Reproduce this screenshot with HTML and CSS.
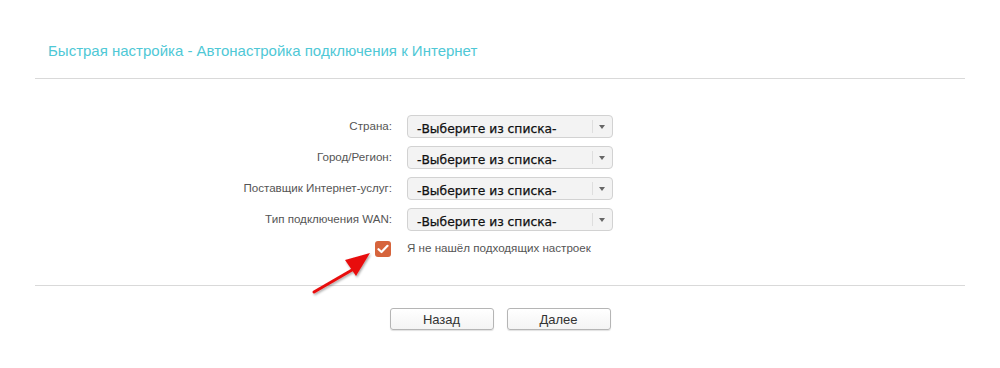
FILE: index.html
```html
<!DOCTYPE html>
<html lang="ru">

<head>
    <meta charset="UTF-8">
    <meta name="viewport" content="width=device-width, initial-scale=1.0">
    <title>Быстрая настройка</title>
    <link rel="stylesheet" href="styles.css">
</head>

<body>
    <div class="page">
        <!-- Заголовок -->
        <h2 class="title">Быстрая настройка - Автонастройка подключения к Интернет</h2>
        <div class="line"></div>

        <!-- Форма -->
        <div class="form">
            <div class="label">Страна:</div>
            <div class="select"><span class="value">-Выберите из списка-</span><span class="drop"></span></div>

            <div class="label">Город/Регион:</div>
            <div class="select"><span class="value">-Выберите из списка-</span><span class="drop"></span></div>

            <div class="label">Поставщик Интернет-услуг:</div>
            <div class="select"><span class="value">-Выберите из списка-</span><span class="drop"></span></div>

            <div class="label">Тип подключения WAN:</div>
            <div class="select"><span class="value">-Выберите из списка-</span><span class="drop"></span></div>

            <div class="label">
                <span class="check">
                    <svg width="12" height="10" viewBox="0 0 12 10">
                        <path d="M1.5 5.2 L4.5 8 L10.5 1.8" fill="none" stroke="#fff" stroke-width="2.2" stroke-linecap="round" stroke-linejoin="round"/>
                    </svg>
                </span>
            </div>
            <div class="check-text">Я не нашёл подходящих настроек</div>
        </div>

        <div class="line"></div>

        <!-- Кнопки -->
        <div class="buttons">
            <button class="btn">Назад</button>
            <button class="btn">Далее</button>
        </div>

        <!-- Красная стрелка -->
        <svg class="arrow" width="80" height="50" viewBox="0 0 80 50">
            <defs>
                <filter id="shadow" x="-20%" y="-20%" width="140%" height="140%">
                    <feDropShadow dx="1" dy="1.5" stdDeviation="1.2" flood-color="#000" flood-opacity="0.35"/>
                </filter>
            </defs>
            <g filter="url(#shadow)">
                <path d="M4 44 L42 22" stroke="#e8100f" stroke-width="3" stroke-linecap="round"/>
                <path d="M60 5 L35 12 L46 28 Z" fill="#e8100f"/>
            </g>
        </svg>
    </div>
</body>

</html>
```

FILE: styles.css
```css
body {
    margin: 0;
    background: #fff;
    font-family: "Liberation Sans", Arial, sans-serif;
}

.page {
    position: relative;
    padding: 0 35px;
    height: 368px;
}

.title {
    margin: 0;
    padding: 42px 0 0 13px;
    height: 36px;
    font-size: 15px;
    font-weight: normal;
    color: #4fc8d6;
}

.line {
    border-top: 1px solid #d9d9d9;
}

.form {
    display: grid;
    grid-template-columns: 357px 206px;
    grid-auto-rows: 31px;
    column-gap: 15px;
    padding-top: 36px;
    height: 170px;
}

.label {
    text-align: right;
    font-size: 11.6px;
    color: #555;
    padding-top: 4px;
}

.select {
    display: flex;
    align-items: center;
    height: 21px;
    border: 1px solid #d2d2d2;
    border-radius: 4px;
    background: #f3f3f3;
}

.value {
    flex: 1;
    padding: 5px 0 0 9px;
    font-family: "DejaVu Sans", sans-serif;
    font-size: 12.3px;
    color: #111;
    -webkit-text-stroke: 0.25px #111;
}

.drop {
    width: 18px;
    height: 13px;
    border-left: 1px solid #dedede;
    margin-right: 1px;
    position: relative;
}

.drop::after {
    content: "";
    position: absolute;
    left: 6px;
    top: 5px;
    border-left: 3px solid transparent;
    border-right: 3px solid transparent;
    border-top: 4px solid #666;
}

.check {
    display: inline-flex;
    align-items: center;
    justify-content: center;
    width: 16px;
    height: 16px;
    margin-top: -3px;
    margin-right: 1px;
    border-radius: 3px;
    background: #d6643c;
}

.check-text {
    font-size: 11.6px;
    color: #555;
    padding-top: 2px;
}

.buttons {
    display: flex;
    justify-content: center;
    gap: 13px;
    padding-top: 22px;
}

.btn {
    width: 104px;
    height: 22px;
    padding: 0;
    border: 1px solid #b5b5b5;
    border-radius: 3px;
    background: linear-gradient(#fff, #f4f4f4);
    box-shadow: 0 1px 1px rgba(0, 0, 0, 0.12);
    font-family: "Liberation Sans", Arial, sans-serif;
    font-size: 13px;
    color: #333;
}

.arrow {
    position: absolute;
    left: 310px;
    top: 248px;
}
```
